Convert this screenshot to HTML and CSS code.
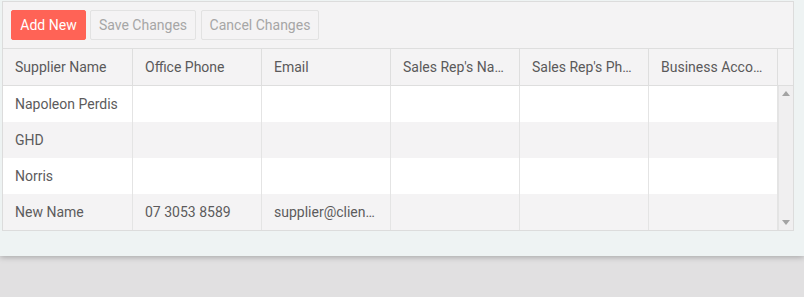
FILE: index.html
```html
<!DOCTYPE html>
<html>
<head>
<meta charset="utf-8">
<link rel="stylesheet" href="styles.css">
</head>
<body>
<div class="panel">
  <div class="grid">
    <div class="toolbar">
      <button class="btn btn-primary">Add New</button>
      <button class="btn btn-save">Save Changes</button>
      <button class="btn btn-cancel">Cancel Changes</button>
    </div>
    <div class="header">
      <div class="hcell">Supplier Name</div>
      <div class="hcell">Office Phone</div>
      <div class="hcell">Email</div>
      <div class="hcell">Sales Rep's Name</div>
      <div class="hcell">Sales Rep's Phone</div>
      <div class="hcell">Business Account</div>
      <div class="hcell spacer"></div>
    </div>
    <div class="body">
      <div class="rows">
        <div class="row"><div class="cell">Napoleon Perdis</div><div class="cell"></div><div class="cell"></div><div class="cell"></div><div class="cell"></div><div class="cell"></div></div>
        <div class="row alt"><div class="cell">GHD</div><div class="cell"></div><div class="cell"></div><div class="cell"></div><div class="cell"></div><div class="cell"></div></div>
        <div class="row"><div class="cell">Norris</div><div class="cell"></div><div class="cell"></div><div class="cell"></div><div class="cell"></div><div class="cell"></div></div>
        <div class="row alt"><div class="cell">New Name</div><div class="cell">07 3053 8589</div><div class="cell">supplier@clientname.com</div><div class="cell"></div><div class="cell"></div><div class="cell"></div></div>
      </div>
      <div class="scrollbar">
        <span class="arrow up"></span>
        <span class="arrow down"></span>
      </div>
    </div>
  </div>
</div>
<div class="footer"></div>
</body>
</html>
```
FILE: styles.css
```css
* { box-sizing: border-box; }
html, body { margin: 0; padding: 0; }
body {
  width: 804px;
  height: 297px;
  background: #e1e0e1;
  font-family: Roboto, "Liberation Sans", sans-serif;
  font-size: 14px;
  color: #5c5b5c;
  overflow: hidden;
}
.panel {
  height: 256px;
  background: #eef3f3;
  padding: 1px 10px 0 2px;
  box-shadow: 0 1px 6px rgba(0,0,0,0.28);
  position: relative;
}
.grid {
  width: 792px;
  border: 1px solid #dcdcdc;
  background: #fff;
}
.toolbar {
  background: #f4f3f4;
  height: 47px;
  padding: 8px 8px 0 8px;
  display: flex;
  gap: 4px;
  border-bottom: 1px solid #dedede;
}
.btn {
  height: 30px;
  border: 1px solid #e2e2e2;
  border-radius: 2px;
  background: #f4f3f4;
  color: #a6a6a6;
  font-family: Roboto, "Liberation Sans", sans-serif;
  font-size: 14px;
  padding: 0;
  line-height: 28px;
  white-space: nowrap;
  text-align: center;
}
.btn-primary {
  width: 75px;
  background: #ff6356;
  border-color: #ff6356;
  color: #fff;
}
.btn-save { width: 106px; }
.btn-cancel { width: 118px; margin-left: 1px; }
.header {
  display: flex;
  background: #f4f3f4;
  height: 37px;
  border-bottom: 1px solid #dedede;
}
.hcell {
  width: 129px;
  flex: none;
  padding: 1px 12px 0;
  line-height: 35px;
  border-right: 1px solid #dedede;
  white-space: nowrap;
  overflow: hidden;
  text-overflow: ellipsis;
  color: #5a595a;
}
.hcell:first-child { width: 130px; }
.hcell.spacer { width: 15px; padding: 0; border-right: none; }
.body { display: flex; }
.rows { width: 775px; }
.row { display: flex; height: 36px; background: #fff; }
.row.alt { background: #f4f3f4; }
.cell {
  width: 129px;
  flex: none;
  padding: 1px 12px 0;
  line-height: 35px;
  border-right: 1px solid #e4e4e4;
  white-space: nowrap;
  overflow: hidden;
  text-overflow: ellipsis;
}
.cell:first-child { width: 130px; }
.scrollbar {
  width: 15px;
  background: #f0eff0;
  position: relative;
  border-left: 1px solid #e4e4e4;
}
.arrow {
  position: absolute;
  left: 3px;
  width: 0;
  height: 0;
  border-left: 4px solid transparent;
  border-right: 4px solid transparent;
}
.arrow.up { top: 5px; border-bottom: 5px solid #a3a3a3; }
.arrow.down { bottom: 5px; border-top: 5px solid #a3a3a3; }
.footer { height: 41px; }
```
